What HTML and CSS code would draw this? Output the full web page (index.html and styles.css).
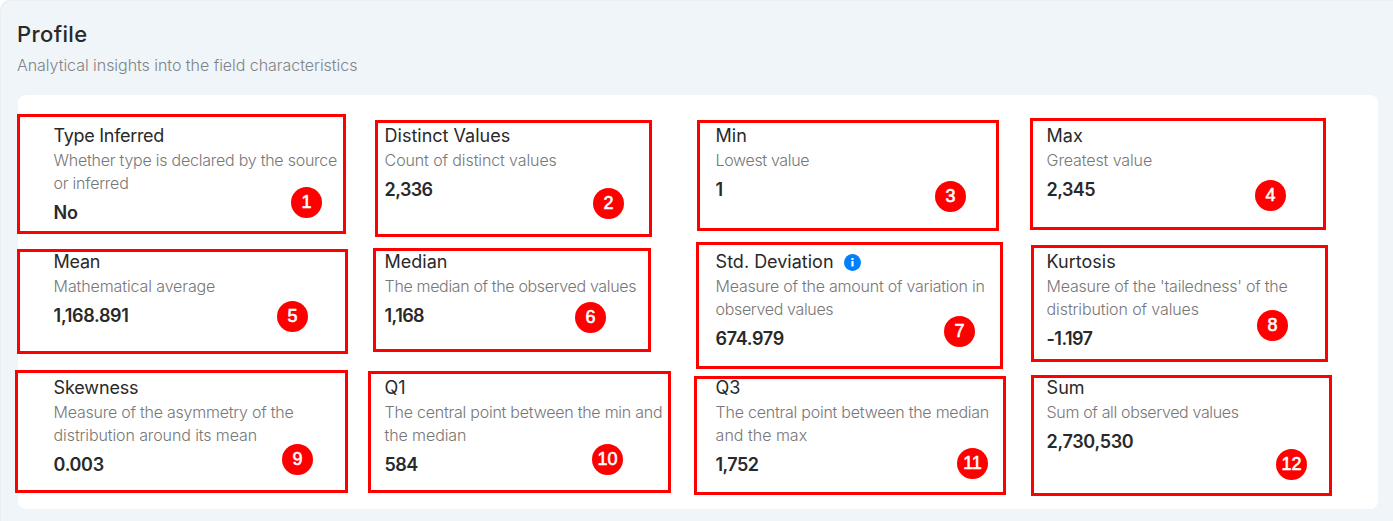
FILE: index.html
```html
<!DOCTYPE html>
<html lang="en">
<head>
<meta charset="utf-8">
<title>Profile</title>
<link rel="stylesheet" href="styles.css">
</head>
<body>
<main class="profile">
  <header class="profile-header">
    <h1 class="profile-title">Profile</h1>
    <p class="profile-subtitle">Analytical insights into the field characteristics</p>
  </header>
  <section class="card">
    <article class="metric"><h2 class="name tight">Type Inferred</h2><p class="desc">Whether type is declared by the source<br>or inferred</p><p class="value">No</p></article>
    <article class="metric"><h2 class="name">Distinct Values</h2><p class="desc wide">Count of distinct values</p><p class="value narrow">2,336</p></article>
    <article class="metric"><h2 class="name">Min</h2><p class="desc narrow">Lowest value</p><p class="value">1</p></article>
    <article class="metric"><h2 class="name">Max</h2><p class="desc wide">Greatest value</p><p class="value narrow">2,345</p></article>
    <article class="metric"><h2 class="name tight">Mean</h2><p class="desc wide">Mathematical average</p><p class="value">1,168.891</p></article>
    <article class="metric"><h2 class="name">Median</h2><p class="desc narrow">The median of the observed values</p><p class="value narrow">1,168</p></article>
    <article class="metric"><h2 class="name">Std. Deviation<svg class="info" viewBox="0 0 17 17"><circle cx="8.5" cy="8.5" r="8.5" fill="#0080ff"/><path d="M7.4 4h2.2v2H7.4zM7.4 7h2.2v5.6H7.4z" fill="#fff"/></svg></h2><p class="desc">Measure of the amount of variation in<br><span class="narrow">observed values</span></p><p class="value">674.979</p></article>
    <article class="metric"><h2 class="name">Kurtosis</h2><p class="desc">Measure of the 'tailedness' of the<br><span class="wide">distribution of values</span></p><p class="value narrow">-1.197</p></article>
    <article class="metric"><h2 class="name snug">Skewness</h2><p class="desc">Measure of the asymmetry of the<br><span class="wide">distribution around its mean</span></p><p class="value">0.003</p></article>
    <article class="metric"><h2 class="name">Q1</h2><p class="desc">The central point between the min and<br><span class="wide">the median</span></p><p class="value narrow">584</p></article>
    <article class="metric"><h2 class="name snug">Q3</h2><p class="desc">The central point between the median<br><span class="plain">and the max</span></p><p class="value narrow">1,752</p></article>
    <article class="metric"><h2 class="name">Sum</h2><p class="desc narrow">Sum of all observed values</p><p class="value">2,730,530</p></article>
  </section>
  <div class="marks">
    <div class="mark m1"><span class="pin">1</span></div>
    <div class="mark m2"><span class="pin">2</span></div>
    <div class="mark m3"><span class="pin">3</span></div>
    <div class="mark m4"><span class="pin">4</span></div>
    <div class="mark m5"><span class="pin">5</span></div>
    <div class="mark m6"><span class="pin">6</span></div>
    <div class="mark m7"><span class="pin">7</span></div>
    <div class="mark m8"><span class="pin">8</span></div>
    <div class="mark m9"><span class="pin">9</span></div>
    <div class="mark m10"><span class="pin">10</span></div>
    <div class="mark m11"><span class="pin">11</span></div>
    <div class="mark m12"><span class="pin">12</span></div>
  </div>
</main>
</body>
</html>
```
FILE: styles.css
```css
* { box-sizing: border-box; }
body { margin: 0; background: #fff; font-family: Inter, "Liberation Sans", sans-serif; color: #292929; }
h1, h2, p { margin: 0; }
.profile { position: relative; height: 521px; overflow: hidden; padding: 20px 15px 0 18px; background: #f0f5fa; border-radius: 10px 0 0 0; box-shadow: inset 1px 1px 0 #eaeff4; }
.profile-header { height: 75px; }
.profile-title { margin-left: -1px; font-size: 22px; line-height: 28px; font-weight: 500; letter-spacing: .38px; }
.profile-subtitle { margin: 6px 0 0 -1px; font-size: 16px; line-height: 23px; font-weight: 300; letter-spacing: -.04px; color: #808488; }
.card { display: grid; grid-template-columns: repeat(4, 331px); grid-auto-rows: 126px; height: 414px; padding: 29px 0 0 35.6px; background: #fff; border-radius: 8px; }
.name { display: flex; align-items: center; gap: 10.5px; height: 25px; font-size: 18px; line-height: 24px; padding-bottom: 1px; font-weight: 400; }
.name.tight { letter-spacing: -.3px; }
.name.snug { letter-spacing: -.15px; }
.info { width: 17px; height: 17px; }
.desc { font-size: 16px; line-height: 23px; font-weight: 300; letter-spacing: -.24px; color: #777; white-space: nowrap; }
.desc.narrow, .desc .narrow { letter-spacing: -.35px; }
.desc.wide, .desc .wide { letter-spacing: -.11px; }
.desc .plain { letter-spacing: 0; }
.value { margin-top: 5px; font-size: 18px; line-height: 26px; font-weight: 600; letter-spacing: -.33px; }
.value.narrow { letter-spacing: -.6px; }

/* Numbered callouts drawn over the metrics */
.marks { position: absolute; inset: 0; }
.mark { position: absolute; border: 3px solid #f00; }
.pin { position: absolute; width: 31px; height: 31px; border-radius: 50%; background: #f00; color: #fff; font: 18px/30px "Liberation Sans", sans-serif; -webkit-text-stroke: .6px #fff; text-align: center; }
.m1 { left: 17px; top: 114px; width: 329px; height: 120px; }
.m2 { left: 375px; top: 120px; width: 277px; height: 117px; }
.m3 { left: 697px; top: 120px; width: 302px; height: 111px; }
.m4 { left: 1030px; top: 118px; width: 296px; height: 112px; }
.m5 { left: 17px; top: 249px; width: 331px; height: 105px; }
.m6 { left: 373px; top: 248px; width: 278px; height: 104px; }
.m7 { left: 696px; top: 242px; width: 307px; height: 127px; }
.m8 { left: 1031px; top: 245px; width: 297px; height: 117px; }
.m9 { left: 15px; top: 370px; width: 333px; height: 123px; }
.m10 { left: 368px; top: 371px; width: 303px; height: 122px; }
.m11 { left: 694px; top: 376px; width: 312px; height: 119px; }
.m12 { left: 1031px; top: 375px; width: 301px; height: 121px; }
.m1 .pin { left: 271px; top: 70px; }
.m2 .pin { left: 215px; top: 65px; }
.m3 .pin { left: 235px; top: 58px; }
.m4 .pin { left: 222px; top: 59px; }
.m5 .pin { left: 257px; top: 49px; }
.m6 .pin { left: 199px; top: 51px; }
.m7 .pin { left: 245px; top: 71px; }
.m8 .pin { left: 223px; top: 62px; }
.m9 .pin { left: 264px; top: 71px; }
.m10 .pin { left: 221px; top: 70px; }
.m11 .pin { left: 260px; top: 69px; }
.m12 .pin { left: 242px; top: 71px; }
```
